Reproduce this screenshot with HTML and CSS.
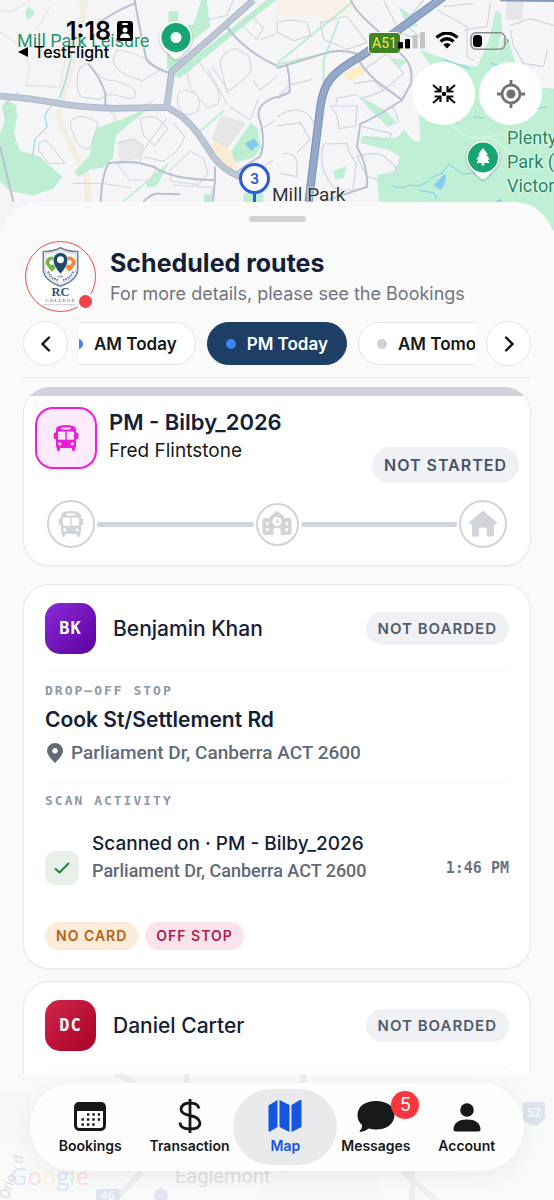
FILE: index.html
```html
<!DOCTYPE html>
<html lang="en">
<head>
<meta charset="utf-8">
<meta name="viewport" content="width=device-width, initial-scale=1">
<title>Scheduled routes</title>
<link rel="stylesheet" href="styles.css">
</head>
<body>
<svg class="defs" aria-hidden="true">
  <symbol id="bus" viewBox="0 0 26 26">
    <path fill="currentColor" fill-rule="evenodd" d="M6 1Q13-.8 20 1Q23 2 23 5v2.500h.8Q25.300 7.500 25.300 9v3.500q0 1.500-1.500 1.500H23v7q0 1.500-1 2v1.500Q22 26 20.500 26T19 24.500V23H7v1.500Q7 26 5.500 26T4 24.500V23q-1-.5-1-2v-7h-.8Q.7 14 .7 12.500V9q0-1.500 1.500-1.500H3V5Q3 2 6 1ZM8.500 2.600v1.800h9V2.600ZM6 6.500Q5 6.500 5 7.500v6.300q0 1 1 1h6.300V6.500Zm7.700 0v8.300H20q1 0 1-1V7.500q0-1-1-1ZM6.800 17.300a1.600 1.600 0 1 0 .01 0ZM19.200 17.300a1.600 1.600 0 1 0 .01 0Z"/>
  </symbol>
</svg>
<div class="screen">
  <header class="map">
    <svg class="map-art" viewBox="0 0 1662 690" preserveAspectRatio="xMidYMin slice" aria-hidden="true">
      <rect width="1662" height="690" fill="#f5f4f6"/>
      <g>
        <path d="M232 0h22l-20 130-38 130-22 90 40 90 46 90 6 100" fill="none" stroke="#f4eee2" stroke-width="20"/>
        <g fill="#bdeed2">
          <path d="M18 300l30 16 4 30-10 54 18 52 60 18 66 60-26 36-60 20-70-12-40-40 6-74-2-40 20-60-8-40Z"/>
          <path d="M290 384l70-24 60-26 20-4-70 56-22 20-10 70-28 26-40 8-34 20-14-14 48-50 6-50Z"/>
          <path d="M506 34h30l-4 40h48l24-74h16l10 80-50 40-50 70-20 16h-10Z"/>
          <path d="M520 222L800 0h31l-20 14-274 222Z"/>
          <path d="M690 458l62-88 20 14 10 60-20 28-60 18Z"/>
          <path d="M76 36l10-16 20 20-24 22ZM440 545l70-62-40 76-30 3ZM612 583h26v24h-26ZM730 580h60v30h-60Z"/>
        </g>
        <path d="M662 346l76 22-60 84-42-36Z" fill="#e6e5e8"/>
        <path d="M640 418l52 34 20 50-16 12-64-56Z" fill="#faecd3"/>
        <path d="M360 424l34-8 30 18-4 42-60 8-8-40Z" fill="#e8e7ea"/>
        <path d="M420 320l48-26-20 26Z" fill="#fadfe2"/>
        <path d="M735 430l28-14 14 18-24 18Z" fill="#83c9ee"/>
        <path d="M600 394l74-64M370 605l110-94" stroke="#bdeed2" stroke-width="5"/>
        <g fill="none" stroke="#d5dae2" stroke-width="3.500" stroke-linejoin="round">
          <path d="M0 34h40l50-34M0 96l60 40 30 66-14 56h90M110 90l40-70M80 255l100 8 30-160" opacity=".6"/>
          <path d="M232 240q0-44 30-50 50 60 80 50l50 20q18 10 14 30l-14 6-60-14-34 16-46-6Q230 290 232 240Z"/>
          <path d="M350 150q80 10 130 60l-54 32-40-14q-46-20-46-50Z"/>
          <path d="M210 366q20-24 50-14l34 14-14 60q-10 24-30 20-30-20-40-80ZM420 356q30-10 50-4l34 34-40 50-34-30ZM350 430l50-14 30 22-10 50M116 430l20-10q20 20 60 70h-50l-30-40Z"/>
          <path d="M532 290q6-20 30-20l28 14q12 20 4 48-30 20-46 8-16-20-16-50ZM560 220l36-36 56 80q10 30 0 50l-30 10-50-60ZM622 204l60 110"/>
          <path d="M660 190q10-40 50-44l36 22q10 24 5 50-30 30-70 60ZM720 70l30-26 40 40-20 34ZM690 320l60 40 24-60M620 60l60-14 20-46M635 200l50 70"/>
          <path d="M420 464l80-110M430 470l60 14q50-30 64-74l-34-40M350 490l60-4 60 20-20 34h-60ZM510 510l60-56 40 20 14 50-30 30-80-10ZM215 550h90l90 14"/>
          <path d="M760 240l20 30 51-40M778 390l50-30M690 500l40 40 90-60M520 555l120 8-14 40M780 120l50-20M330 340q20-4 14 24"/>
        </g>
        <g fill="none" stroke="#b9c1d0" stroke-width="6">
          <path d="M404 10Q345 34 300 66M404 0Q425 120 440 180Q460 204 512 220M264 190Q300 230 316 280v40M680 80Q730 150 831 198"/>
          <path d="M302 605Q306 520 326 490Q400 478 460 500Q520 540 645 540V500M645 540l-6 65M430 605q26-26 50-24l60 2"/>
          <path d="M831 290Q770 310 776 350Q800 420 780 470Q730 500 706 520M0 440l40 165"/>
        </g>
        <path d="M215 160Q200 240 180 290L144 330l-10 20 8 30-36 36-8 50M20 310l36-34" fill="none" stroke="#83d0ec" stroke-width="3"/>
        <g fill="none" stroke-linejoin="round">
          <g stroke="#a7b3c8" stroke-width="20"><path d="M0 288Q100 296 170 309T340 325L500 322M500 322L515 215Q640 110 760 0M500 322C560 350 590 390 640 470Q670 510 720 530"/></g>
          <g stroke="#bdc6d5" stroke-width="15"><path d="M0 288Q100 296 170 309T340 325L500 322M500 322L515 215Q640 110 760 0M500 322C560 350 590 390 640 470Q670 510 720 530"/></g>
        </g>
      </g>
      <g transform="translate(831 0)">
        <path d="M0 0h240l20 20-100 40-60-12L0 50Z" fill="#f8f1e8"/>
        <g fill="#bff0d6">
          <path d="M300 525l50-10 20-44-30-20-90-22 6-22 100 8 24-24 50-54 60-62 110-40 50-40 30-84 10 0 30 90 50 60 111 10v470H360l-10-40-40-38Z"/>
          <path d="M430 150l110 40 60 10 36-80 20-90 16 10 4 50-20 90-20 60-100 20-60-40ZM364 20l30 18 30 40-30 4ZM240 285l40 20 50 30 30 34-28 12-60-60ZM170 512l40-14-10 36-26 6ZM345 175l45 6-20 24Z"/>
        </g>
        <path d="M690 0h50l-4 60h-50Z" fill="#e6e6ea"/>
        <path d="M196 218l60-24 8 26-48 24Z" fill="#fbedc7"/>
        <path d="M0 190L220 12M0 194l180-42M186 60l-46 120v120" fill="none" stroke="#bdeed2" stroke-width="6"/>
        <path d="M366 366l60-36 4 90q-10 8-24 0Z" fill="#f5f4f6"/>
        <g fill="none" stroke="#cfd5df" stroke-width="3.500" stroke-linejoin="round">
          <path d="M0 66l40-6 50 6 10 40-50 16L0 96ZM130 68l80-20 60 80-60 20-70-30ZM320 0l50 100 50 16M440 0l-60 70 60 50M560 90l70-10 10-70M480 30l90 50v90l20 10M500 20l90-10"/>
          <path d="M700 76l60-20 71 20M700 90l10 50 30 50 60 10 11-50M0 294l40-40 66-16M0 350q60-40 100 0l20 40M0 378l70-10 30 50-40 40M20 460q40 0 40 30v40l-50-10M140 432l70-2 8 30 20 30-10 80h-50q-60-60-38-138ZM240 470q50-16 76-4 40 30 44 44-20 24-50 30l-40-10Z"/>
          <path d="M160 318h80l-4 60-50 8-6-40ZM176 318l4-24 60-10M230 250l60-8 30 30-66 24M260 210l70-50 50 60-60 50M254 380l90 20-10 20-70-6M366 366l-20-50"/>
        </g>
        <g fill="none" stroke="#b9c1d0" stroke-width="6">
          <path d="M0 204L160 155Q200 150 236 160Q250 200 300 245L375 300M222 0Q230 30 300 90L380 170Q410 200 402 250L375 300Q300 350 250 372L240 440Q274 500 270 560L140 605M30 196q10 40 8 80l-38 18M490 0l-20 20"/>
        </g>
        <path d="M670-6q80 2 161 2" fill="none" stroke="#8699bd" stroke-width="20"/>
        <g fill="none" stroke="#84cdee" stroke-width="3">
          <path d="M344 556q30 14 50 0l32 2 30-16q10-14 40-22l20-28 40 30 60-4M520 350q20 10 26 24M590 350l30 4M430 572l40 6 10 20M640 190l80 16M770 330l40-10M500 178l80 28"/>
        </g>
        <path d="M470 556l30-32h8l-6 30-10 16ZM655 604l18-8v10Z" fill="#83cdf0"/>
        <path d="M520 372q50 50 90 40t90 50M620 420q50-30 80-10" fill="none" stroke="#d4f4df" stroke-width="5"/>
        <path d="M500-10L350 100L250 170C160 220 140 250 130 320L95 605" fill="none" stroke="#7a91b8" stroke-width="25"/>
        <path d="M500-10L350 100L250 170C160 220 140 250 130 320L95 605" fill="none" stroke="#94a9c9" stroke-width="19"/>
      </g>
    </svg>
    <span class="place place-leisure">Mill Park Leisure</span>
    <span class="place place-town">Mill Park</span>
    <span class="place place-gorge">Plenty<br>Park (<br>Victor</span>
    <span class="shield">A51</span>
    <svg class="pin pin-leisure" viewBox="0 0 36 42" aria-hidden="true"><path d="M18 1a17 17 0 0 1 9 31l-6 6q-3 2.500-6 0l-6-6A17 17 0 0 1 18 1Z" fill="#fff"/><circle cx="18" cy="17.500" r="14.500" fill="#17a673"/><circle cx="18" cy="17.500" r="5.500" fill="#fff"/></svg>
    <svg class="pin pin-gorge" viewBox="0 0 36 42" aria-hidden="true"><path d="M18 1a17 17 0 0 1 9 31l-6 6q-3 2.500-6 0l-6-6A17 17 0 0 1 18 1Z" fill="#fff"/><circle cx="18" cy="17.500" r="15" fill="#17a673"/><path d="M18 8l5 6.500h-2l4 5h-2.500l2 3.500h-5.200v2.500h-2.600V23h-5.200l2-3.500H11l4-5h-2Z" fill="#fff"/></svg>
    <span class="stop-marker">3</span>
    <div class="status">
      <div class="status-left">
        <div class="clock">1:18
          <svg width="16" height="20" viewBox="0 0 16 20" aria-hidden="true"><rect width="16" height="20" rx="3" fill="#000"/><rect x="5" y="2" width="6" height="2" rx="1" fill="#fff"/><circle cx="8" cy="9" r="2.500" fill="#fff"/><path d="M3 17q0-4.500 5-4.500t5 4.500Z" fill="#fff"/></svg>
        </div>
        <div class="back"><svg width="10" height="10" viewBox="0 0 10 10" aria-hidden="true"><path d="M0 5L10 0v10Z"/></svg>TestFlight</div>
      </div>
      <svg class="status-right" viewBox="0 0 112 18" aria-hidden="true">
        <rect x="1" y="10" width="5" height="6.500" rx="1"/><rect x="8" y="7" width="5" height="9.500" rx="1"/><g fill="#c3c4c8"><rect x="15.500" y="3" width="5" height="13.500" rx="1"/><rect x="23" y="0" width="5" height="16.500" rx="1"/></g>
        <path d="M39.500 5.500q10.500-9 21 0M43.500 9.500q6.500-5.500 13 0" fill="none" stroke="#000" stroke-width="3.200"/><path d="M46.200 12.500q3.800-3 7.600 0L50 16.500Z"/>
        <rect x="74" y="0.800" width="34" height="16.400" rx="5" fill="none" stroke="#898b8f" stroke-width="1.500"/><rect x="76" y="3" width="9" height="12" rx="3.500"/><path d="M110 6.500q3 2.500 0 5Z" fill="#898b8f"/>
      </svg>
    </div>
    <div class="map-tools">
      <button class="tool" aria-label="Fit route"><svg width="24" height="20" viewBox="0 0 24 20"><g fill="none" stroke="#111" stroke-width="2.200"><path d="M1 1l7 6M8.500 2v5.500H2.500M23 1l-7 6M15.500 2v5.500h6M1 19l7-6M8.500 18v-5.500H2.500M23 19l-7-6M15.500 18v-5.500h6"/></g><circle cx="12" cy="10" r="2.200"/></svg></button>
      <button class="tool" aria-label="My location"><svg width="28" height="28" viewBox="0 0 28 28"><g fill="none" stroke="#707174" stroke-width="2.800"><circle cx="14" cy="14" r="9"/><path d="M14 0v5M14 23v5M0 14h5M23 14h5"/></g><circle cx="14" cy="14" r="4.600" fill="#707174"/></svg></button>
    </div>
  </header>

  <main class="sheet">
    <div class="handle"></div>
    <section class="intro">
      <div class="logo">
        <svg viewBox="0 0 72 72" role="img" aria-label="RC College">
          <path d="M36 6q8 4 18 4v18q0 12-18 18Q18 40 18 28V10q10 0 18-4Z" fill="#fff" stroke="#6f8298" stroke-width="1.600"/>
          <path d="M36 8.500q7 3 16 3.500v16q0 10-16 15.500Q20 38 20 28V12q9-.5 16-3.500Z" fill="none" stroke="#a9b5c3" stroke-width=".7"/>
          <path d="M27 15a6.500 6.500 0 0 1 6 9q-2 4-6 7-6-6-6.500-9.500Q21 15 27 15Z" fill="#76b443"/><circle cx="27" cy="21.500" r="2.600" fill="#fff"/>
          <path d="M45 15a6.500 6.500 0 0 1 6 9q-2 4-6 7-6-6-6.500-9.500Q39 15 45 15Z" fill="#f08a3c"/><circle cx="45" cy="21.500" r="2.600" fill="#fff"/>
          <path d="M36 11a7.700 7.700 0 0 1 7.700 7.700Q43.700 25 36 33.500 28.300 25 28.300 18.700A7.700 7.700 0 0 1 36 11Z" fill="#23476f" stroke="#fff" stroke-width=".7"/><circle cx="36" cy="18.500" r="3.600" fill="#fff"/>
          <path d="M23 31q3 7 11 9M49 31q-3 7-11 9" fill="none" stroke="#58708a" stroke-width="2" stroke-dasharray="1.500 1"/>
          <path d="M33 35h6v2h-6Z" fill="#aab5c0"/>
          <text x="36" y="56" class="logo-rc">RC</text>
          <text x="36" y="62.500" class="logo-college">COLLEGE</text>
          <path d="M19 65.500h34" stroke="#a4b0bf" stroke-width="1" stroke-dasharray="2 1"/>
        </svg>
        <span class="logo-dot"></span>
      </div>
      <div class="intro-text">
        <h1>Scheduled routes</h1>
        <p>For more details, please see the Bookings</p>
      </div>
    </section>
    <nav class="picker" aria-label="Sessions">
      <button class="round" aria-label="Previous"><svg width="10" height="16" viewBox="0 0 10 16"><path d="M8 1.500L1.500 8 8 14.500"/></svg></button>
      <div class="chips">
        <button class="chip"><i class="dot"></i>AM Today</button>
        <button class="chip chip-on"><i class="dot"></i>PM Today</button>
        <button class="chip"><i class="dot dot-off"></i>AM Tomorrow</button>
      </div>
      <button class="round" aria-label="Next"><svg width="10" height="16" viewBox="0 0 10 16"><path d="M2 1.500L8.500 8 2 14.500"/></svg></button>
    </nav>
    <div class="list">
      <article class="card route">
        <div class="route-head">
          <span class="route-icon"><svg width="26" height="26"><use href="#bus"/></svg></span>
          <div class="route-text"><h2>PM - Bilby_2026</h2><p>Fred Flintstone</p></div>
          <span class="badge badge-lg">NOT STARTED</span>
        </div>
        <div class="steps">
          <span class="step"><svg width="26" height="26"><use href="#bus"/></svg></span>
          <span class="line"></span>
          <span class="step step-mid"><svg width="30" height="26" viewBox="0 0 30 26"><path fill="currentColor" fill-rule="evenodd" d="M15 0l7 5v2h5q2.500 0 2.500 2.500V22q0 2-2 2h-9v-5q0-2-2-2h-3q-2 0-2 2v5h-9q-2 0-2-2V9.500Q.5 7 3 7h5V5ZM4 11v3h2.500v-3Zm0 6v3h2.500v-3Zm19.500-6v3H26v-3Zm0 6v3H26v-3ZM15 6a4.500 4.500 0 1 0 .01 0Z"/><path d="M15 8v3h2.500" fill="none" stroke="currentColor" stroke-width="1.500"/></svg></span>
          <span class="line"></span>
          <span class="step"><svg width="28" height="26" viewBox="0 0 28 26"><path fill="currentColor" d="M12.800.6q1.200-1 2.400 0L27.500 11q1 1.500-.7 2.200H25V24q0 1.500-1.500 1.500h-4.700q-1 0-1-1V18q0-1.500-1.500-1.500h-4.600q-1.500 0-1.500 1.500v6.500q0 1-1 1H4.500Q3 25.500 3 24V13.200H1.200Q-.5 12.500.5 11Z"/></svg></span>
        </div>
      </article>
      <article class="card person">
        <div class="person-head"><span class="initials purple">BK</span><h3>Benjamin Khan</h3><span class="badge">NOT BOARDED</span></div>
        <section class="block stop">
          <h4>DROP–OFF STOP</h4>
          <p class="stop-name">Cook St/Settlement Rd</p>
          <p class="address"><svg width="16" height="20" viewBox="0 0 16 20" aria-hidden="true"><path fill="currentColor" fill-rule="evenodd" d="M8 0a8 8 0 0 1 8 8q0 4.500-8 12Q0 12.500 0 8a8 8 0 0 1 8-8Zm0 5a2.800 2.800 0 1 0 .01 0Z"/></svg>Parliament Dr, Canberra ACT 2600</p>
        </section>
        <section class="block scan">
          <h4>SCAN ACTIVITY</h4>
          <div class="scan-row">
            <span class="tick"><svg width="16" height="12" viewBox="0 0 16 12" aria-hidden="true"><path d="M1 6.500L5.500 10.500 15 1"/></svg></span>
            <div class="scan-text"><p class="scan-title">Scanned on · PM - Bilby_2026</p><p class="address">Parliament Dr, Canberra ACT 2600</p></div>
            <time>1:46 PM</time>
          </div>
          <div class="tags"><span class="tag amber">NO CARD</span><span class="tag rose">OFF STOP</span></div>
        </section>
      </article>
      <article class="card person">
        <div class="person-head"><span class="initials red">DC</span><h3>Daniel Carter</h3><span class="badge">NOT BOARDED</span></div>
        <section class="block stop"></section>
      </article>
    </div>
  </main>

  <footer class="dock">
    <svg class="dock-art" viewBox="0 0 554 126" preserveAspectRatio="xMidYMax slice" aria-hidden="true">
      <g fill="none" stroke="#eceef0" stroke-width="6"><path d="M115 0q18 6 30 18M187 0v14M303 0v12M284 97q-6 16-2 29M402 97l34 29M412 97v29M142 98l-28 28"/></g>
      <path d="M0 20h30v50H0ZM260 98h120v28H260Z" fill="#f5f8f6"/>
      <rect x="96" y="115" width="24" height="20" rx="2" fill="#dde3f0"/><circle cx="161" cy="121" r="7" fill="#e2e6f1"/>
      <path d="M523 28h22v16q-3 6-11 8-8-2-11-8Z" fill="#dde3ed"/>
      <text x="101" y="126" class="art-num">46</text><text x="527" y="43" class="art-num">52</text>
      <text x="175" y="109" class="art-town">Eaglemont</text>
      <text x="8" y="126" class="art-road" transform="rotate(-70 8 126)">Orio</text><text x="22" y="90" class="art-road" transform="rotate(-80 22 90)">d</text>
      <text x="10" y="111" class="art-google"><tspan fill="#dce6fa">G</tspan><tspan fill="#fae0df">o</tspan><tspan fill="#fcf3d9">o</tspan><tspan fill="#dce6fa">g</tspan><tspan fill="#def0e3">l</tspan><tspan fill="#fae0df">e</tspan></text>
    </svg>
    <nav class="tabs" aria-label="Main">
      <a class="tab" href="#bookings"><svg width="34" height="34" viewBox="0 0 34 34"><rect x="2.500" y="4.500" width="29" height="26" rx="4" fill="#fff" stroke="#17181a" stroke-width="3"/><path d="M1.500 12V8q0-5 5-5h21q5 0 5 5v4Z"/><g stroke="#17181a" stroke-width="2.400" stroke-dasharray="2.400 3"><path d="M14 15.500h13M8.500 20.500h19M8.500 25.500h14"/></g></svg>Bookings</a>
      <a class="tab" href="#transaction"><svg width="34" height="34" viewBox="0 0 34 34"><path d="M17 0v34M26 9.500Q25 4 17 4T8 10q0 5 9 6.500t10 7.500q0 6-10 6T7 23.500" fill="none" stroke="#17181a" stroke-width="2.800"/></svg>Transaction</a>
      <a class="tab tab-on" href="#map" aria-current="page"><svg width="34" height="34" viewBox="0 0 34 34"><path fill="#1556e0" d="M.5 6.500L9.500 1v27L2 32.500Q.5 33 .5 31.500ZM11.500 1l10 5v27l-10-5ZM23.500 6L32 1q1.500-.5 1.500 1v26l-10 5Z"/></svg>Map</a>
      <a class="tab" href="#messages"><svg width="38" height="34" viewBox="0 0 38 34"><path d="M19 2c11 0 18.500 5.500 18.500 14S30 30.500 19 30.500q-4 0-7-1Q8 32.500 3 33q-1-.5 0-1.500 2.500-2.500 2-5.500Q.5 22 .5 16C.5 7.500 8 2 19 2Z"/></svg><span class="count">5</span>Messages</a>
      <a class="tab" href="#account"><svg width="34" height="34" viewBox="0 0 34 34"><circle cx="17" cy="11" r="6.800"/><path d="M3.500 30Q4.500 20.500 17 20.500T30.500 30q0 2.500-2.500 2.500H6q-2.500 0-2.500-2.500Z"/></svg>Account</a>
    </nav>
  </footer>
</div>
</body>
</html>
```
FILE: styles.css
```css
* { box-sizing: border-box; }
body { margin: 0; font-family: Inter, "Noto Sans", sans-serif; color: #17181a; background: #fafafa; }
h1, h2, h3, h4, p { margin: 0; }
button { font: inherit; color: inherit; padding: 0; cursor: pointer; }
svg { display: block; flex: none; }
.defs { position: absolute; width: 0; height: 0; }
.screen { height: 100vh; display: flex; flex-direction: column; overflow: hidden; background: #f9fafa; }

/* Map */
.map { position: relative; flex: none; height: 230px; margin-bottom: -28px; padding: 18px 12px 0 11px; overflow: hidden; }
.map-art { position: absolute; inset: 0; width: 100%; height: 100%; }
.place { position: absolute; font-family: Roboto, sans-serif; font-size: 19px; line-height: 24px; white-space: nowrap; text-shadow: 0 0 2px #fff, 0 0 2px #fff; }
.place-leisure { left: 17px; top: 29px; font-size: 18px; color: #22936d; }
.place-town { left: 272px; top: 183px; color: #333; }
.place-gorge { left: 507px; top: 126px; font-size: 18px; color: #22875f; }
.shield { position: absolute; left: 368px; top: 32px; padding: 0 3px; border: 1px solid #fff; border-radius: 4px; background: #3d8426; color: #f7e54c; font: 14px/20px Roboto, sans-serif; }
.pin { position: absolute; width: 36px; filter: drop-shadow(0 1px 1px rgba(0, 0, 0, .25)); }
.pin-leisure { left: 158px; top: 20px; }
.pin-gorge { left: 465px; top: 140px; }
.stop-marker { position: absolute; left: 239px; top: 163px; width: 31px; height: 31px; border: 3px solid #2b5bd7; border-radius: 50%; background: #fff; color: #2b5bd7; font-size: 14px; font-weight: 600; line-height: 25px; text-align: center; }
.stop-marker::after { content: ""; position: absolute; left: 11px; top: 28px; width: 3px; height: 12px; background: #2b5bd7; }
.status { position: relative; display: flex; justify-content: space-between; padding: 0 33px 0 7px; color: #000; }
.clock { display: flex; align-items: center; gap: 6px; padding-left: 48px; font-size: 25px; font-weight: 600; line-height: 26px; }
.back { display: flex; align-items: center; gap: 6px; font-size: 16px; font-weight: 500; line-height: 16px; }
.status-right { width: 112px; margin-top: 14px; height: 18px; }
.map-tools { position: relative; display: flex; justify-content: flex-end; gap: 4px; margin-top: 2px; }
.tool { width: 63px; height: 63px; display: grid; place-items: center; border: 0; border-radius: 50%; background: #fff; }

/* Sheet */
.sheet { position: relative; flex: 1; min-height: 0; display: flex; flex-direction: column; padding: 14px 23px 0; border-radius: 40px 40px 0 0; background: #fafafa; }
.handle { flex: none; width: 57px; height: 6px; margin: 0 auto; border-radius: 3px; background: #d1d2d4; }
.intro { display: flex; align-items: center; gap: 14px; margin-top: 19px; padding-left: 2px; }
.intro-text { padding-top: 3px; }
.logo { position: relative; flex: none; width: 71px; height: 71px; border: 1px solid #ee4a50; border-radius: 50%; background: #fff; }
.logo-rc { font: 700 13px "Liberation Serif", serif; fill: #3b5573; text-anchor: middle; }
.logo-college { font: 700 5px "Liberation Serif", serif; letter-spacing: 1px; fill: #71849a; text-anchor: middle; }
.logo-dot { position: absolute; right: 0; bottom: 0; width: 19px; height: 19px; border: 3px solid #fafafa; border-radius: 50%; background: #ee4347; }
h1 { font-size: 25px; line-height: 32px; font-weight: 700; color: #14203a; }
.intro-text p { font-size: 18px; line-height: 30px; color: #70757e; white-space: nowrap; }
.picker { display: flex; align-items: center; gap: 11px; margin-top: 9px; padding-bottom: 11px; border-bottom: 1px solid #e4e6e8; }
.round { flex: none; width: 45px; height: 45px; display: grid; place-items: center; border: 1px solid #e2e5e8; border-radius: 50%; background: #fff; }
.round path { fill: none; stroke: #17181a; stroke-width: 2.400; stroke-linecap: round; }
.chips { flex: 1; min-width: 0; display: flex; gap: 11px; overflow: hidden; }
.chip { flex: none; height: 43px; display: flex; align-items: center; gap: 11px; padding: 0 18px; border: 1px solid #e2e5e8; border-radius: 22px; background: #fff; font-size: 17px; font-weight: 600; white-space: nowrap; }
.chip:first-child { margin-left: -25px; }
.chip-on { border-color: #1d3f66; background: #1d3f66; color: #fff; }
.dot { width: 10px; height: 10px; border-radius: 50%; background: #3b82f6; }
.dot-off { background: #d1d2d4; }

/* Cards */
.list { flex: 1; min-height: 0; overflow: hidden; padding-top: 9px; }
.card { border: 1px solid #e5e7e9; border-radius: 26px; background: #fff; overflow: hidden; box-shadow: 0 1px 2px rgba(0, 0, 0, .04); }
.card + .card { margin-top: 12px; }
.route + .card { margin-top: 18px; }
.route { border-top: 0; padding-bottom: 17px; }
.route::before { content: ""; display: block; height: 9px; background: #d1d3d8; }
.route-head { display: flex; gap: 12px; padding: 11px 11px 0; }
.route-icon { flex: none; width: 62px; height: 62px; display: grid; place-items: center; border: 2px solid #ee1fd6; border-radius: 18px; background: #fdeafd; color: #f01ad8; }
.route-text { flex: 1; padding-top: 1px; white-space: nowrap; }
h2 { font-size: 22px; line-height: 29px; font-weight: 600; color: #14203a; }
.route-text p { font-size: 19px; line-height: 28px; }
.badge { flex: none; padding: 0 12px; border-radius: 18px; background: #eff1f5; color: #515c6e; font-size: 15px; line-height: 33px; font-weight: 600; letter-spacing: 1px; }
.badge-lg { align-self: flex-end; margin-bottom: -14px; font-size: 16px; line-height: 36px; color: #46546a; }
.steps { display: flex; align-items: center; gap: 2px; margin-top: 31px; padding: 0 23px; color: #d1d4d8; }
.step { flex: none; width: 48px; height: 48px; display: grid; place-items: center; border: 2px solid; border-radius: 50%; }
.step-mid { width: 43px; height: 43px; }
.line { flex: 1; height: 5px; border-radius: 3px; background: #d1d4d8; }
.person { padding: 18px 21px; }
.person-head { display: flex; align-items: center; gap: 17px; }
.initials { flex: none; width: 51px; height: 51px; border-radius: 15px; color: #fff; font: 700 17px/51px "DejaVu Sans Mono", monospace; text-align: center; letter-spacing: 1px; }
.purple { background: linear-gradient(135deg, #8b2bd6, #5b00a0); }
.red { background: linear-gradient(135deg, #d0274c, #a80026); }
h3 { flex: 1; font-size: 21px; line-height: 28px; font-weight: 500; color: #14203a; white-space: nowrap; }
.block { border-top: 1px solid #f5f6f7; }
.stop { margin-top: 16px; padding: 10px 0 16px; }
.scan { padding-top: 8px; }
h4 { font: 700 13px/20px "DejaVu Sans Mono", monospace; letter-spacing: 2px; color: #9198a5; }
.stop-name { margin-top: 3px; font-size: 21px; line-height: 32px; font-weight: 600; color: #14203a; }
.address { display: flex; align-items: center; gap: 8px; font: 500 18px/26px Roboto, sans-serif; color: #626a77; white-space: nowrap; }
.stop .address { padding: 4px 0 0 2px; font-size: 19px; }
.scan-row { display: flex; align-items: center; gap: 13px; margin-top: 18px; }
.tick { flex: none; width: 34px; height: 34px; margin-top: 22px; display: grid; place-items: center; border-radius: 10px; background: #e7f1ea; }
.tick path { fill: none; stroke: #23803f; stroke-width: 2; }
.scan-text { flex: 1; }
.scan-title { font-size: 19px; line-height: 28px; font-weight: 500; color: #14203a; white-space: nowrap; }
time { margin-top: 22px; font: 700 15px/20px "DejaVu Sans Mono", monospace; color: #6c7480; }
.tags { display: flex; gap: 7px; margin-top: 37px; }
.tag { padding: 0 11px; border-radius: 14px; font-size: 14px; line-height: 28px; font-weight: 600; letter-spacing: 1px; }
.amber { background: #fcebd7; color: #b4611b; }
.rose { background: #fce4ea; color: #b12050; }

/* Bottom navigation */
.dock { position: relative; flex: none; height: 126px; padding: 9px 30px 0; background: #f8f9f9; }
.dock-art { position: absolute; inset: 0; width: 100%; height: 100%; }
.art-num { font: 12px Roboto, sans-serif; fill: #fff; }
.art-town { font: 20px Roboto, sans-serif; fill: #dfe0e1; }
.art-road { font: 14px Roboto, sans-serif; fill: #dcdddf; }
.art-google { font: 500 24px "Open Sans", sans-serif; }
.tabs { position: relative; display: flex; align-items: center; height: 88px; padding: 0 15px; border-radius: 44px; background: #fefefe; box-shadow: 0 4px 20px rgba(0, 0, 0, .06); }
.tab { position: relative; flex: 1 1 auto; height: 76px; display: flex; flex-direction: column; align-items: center; gap: 3px; padding-top: 10px; border-radius: 38px; color: #17181a; fill: #17181a; font-size: 14px; line-height: 20px; font-weight: 600; text-decoration: none; }
.tab-on { flex: 0 0 104px; margin: 0 -10px; background: #e9eaec; color: #1556e0; }
.count { position: absolute; right: 5px; top: 2px; width: 28px; height: 28px; border-radius: 50%; background: #fb363c; color: #fff; font-size: 18px; font-weight: 400; line-height: 28px; text-align: center; }
```
